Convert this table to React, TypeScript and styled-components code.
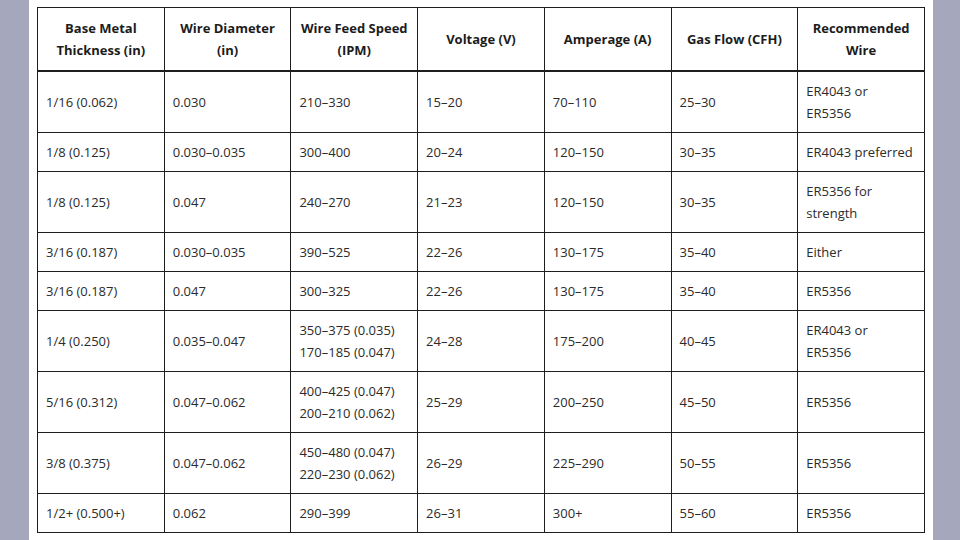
import styled, { createGlobalStyle } from "styled-components";

const GlobalStyle = createGlobalStyle`
  html, body {
    margin: 0;
    padding: 0;
    background: #a5a8bd;
  }
`;

type Row = {
  thickness: string;
  diameter: string;
  speed: string[];
  voltage: string;
  amperage: string;
  gas: string;
  wire: string[];
};

const headers = [
  ["Base Metal", "Thickness (in)"],
  ["Wire Diameter", "(in)"],
  ["Wire Feed Speed", "(IPM)"],
  ["Voltage (V)"],
  ["Amperage (A)"],
  ["Gas Flow (CFH)"],
  ["Recommended", "Wire"],
];

const rows: Row[] = [
  { thickness: "1/16 (0.062)", diameter: "0.030", speed: ["210–330"], voltage: "15–20", amperage: "70–110", gas: "25–30", wire: ["ER4043 or", "ER5356"] },
  { thickness: "1/8 (0.125)", diameter: "0.030–0.035", speed: ["300–400"], voltage: "20–24", amperage: "120–150", gas: "30–35", wire: ["ER4043 preferred"] },
  { thickness: "1/8 (0.125)", diameter: "0.047", speed: ["240–270"], voltage: "21–23", amperage: "120–150", gas: "30–35", wire: ["ER5356 for", "strength"] },
  { thickness: "3/16 (0.187)", diameter: "0.030–0.035", speed: ["390–525"], voltage: "22–26", amperage: "130–175", gas: "35–40", wire: ["Either"] },
  { thickness: "3/16 (0.187)", diameter: "0.047", speed: ["300–325"], voltage: "22–26", amperage: "130–175", gas: "35–40", wire: ["ER5356"] },
  { thickness: "1/4 (0.250)", diameter: "0.035–0.047", speed: ["350–375 (0.035)", "170–185 (0.047)"], voltage: "24–28", amperage: "175–200", gas: "40–45", wire: ["ER4043 or", "ER5356"] },
  { thickness: "5/16 (0.312)", diameter: "0.047–0.062", speed: ["400–425 (0.047)", "200–210 (0.062)"], voltage: "25–29", amperage: "200–250", gas: "45–50", wire: ["ER5356"] },
  { thickness: "3/8 (0.375)", diameter: "0.047–0.062", speed: ["450–480 (0.047)", "220–230 (0.062)"], voltage: "26–29", amperage: "225–290", gas: "50–55", wire: ["ER5356"] },
  { thickness: "1/2+ (0.500+)", diameter: "0.062", speed: ["290–399"], voltage: "26–31", amperage: "300+", gas: "55–60", wire: ["ER5356"] },
];

function Lines({ items }: { items: string[] }) {
  return (
    <>
      {items.map((t, i) => (
        <Line key={i}>{t}</Line>
      ))}
    </>
  );
}

export default function App() {
  return (
    <>
      <GlobalStyle />
      <Page>
        <Panel>
          <Table>
            <thead>
              <tr>
                {headers.map((h, i) => (
                  <Th key={i}>
                    <Lines items={h} />
                  </Th>
                ))}
              </tr>
            </thead>
            <tbody>
              {rows.map((r, i) => (
                <tr key={i}>
                  <Td>{r.thickness}</Td>
                  <Td>{r.diameter}</Td>
                  <Td>
                    <Lines items={r.speed} />
                  </Td>
                  <Td>{r.voltage}</Td>
                  <Td>{r.amperage}</Td>
                  <Td>{r.gas}</Td>
                  <Td>
                    <Lines items={r.wire} />
                  </Td>
                </tr>
              ))}
            </tbody>
          </Table>
        </Panel>
      </Page>
    </>
  );
}

const Page = styled.div`
  width: 960px;
  height: 540px;
  display: flex;
  justify-content: center;
  padding-left: 2px;
  box-sizing: border-box;
  background: #a5a8bd;
  overflow: hidden;
`;

const Panel = styled.div`
  width: 904px;
  height: 540px;
  background: #ffffff;
  padding: 7px 8px 0;
  box-sizing: border-box;
`;

const Table = styled.table`
  width: 888px;
  table-layout: fixed;
  border-collapse: collapse;
  font-family: "Open Sans", "Noto Sans", sans-serif;
  font-size: 13px;
  color: #2b2b2b;
`;

const Th = styled.th`
  border: 1px solid #1e1e1e;
  border-bottom: 2px solid #1e1e1e;
  padding: 9px 4px;
  line-height: 22px;
  font-weight: 700;
  text-align: center;
  vertical-align: middle;
  color: #1c1c1c;
`;

const Td = styled.td`
  border: 1px solid #1e1e1e;
  padding: 8px 8px;
  line-height: 22px;
  text-align: left;
  vertical-align: middle;
`;

const Line = styled.div`
  white-space: nowrap;
`;
